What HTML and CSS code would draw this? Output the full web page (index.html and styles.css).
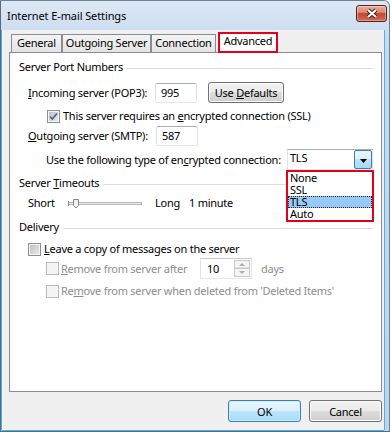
FILE: index.html
```html
<!DOCTYPE html>
<html lang="en">
<head>
  <meta charset="UTF-8" />
  <title>Internet E-mail Settings</title>
  <link rel="stylesheet" href="styles.css">
</head>
<body>

  <div class="window">
    <div class="titlebar">
      <span class="title">Internet E-mail Settings</span>
      <button class="close" aria-label="Close">
        <svg width="14" height="11" viewBox="0 0 14 11">
          <path d="M3 2 L11 9 M11 2 L3 9" stroke="#3b1a14" stroke-width="4"/>
          <path d="M3 2 L11 9 M11 2 L3 9" stroke="#fff" stroke-width="2.2"/>
        </svg>
      </button>
    </div>

    <div class="client">
      <nav class="tabs" role="tablist">
        <span class="tab" role="tab">General</span>
        <span class="tab" role="tab">Outgoing Server</span>
        <span class="tab" role="tab">Connection</span>
        <span class="tab active" role="tab" aria-selected="true">Advanced</span>
      </nav>

      <section class="panel" role="tabpanel">
        <div class="group-head server-head"><span>Server Port Numbers</span><i class="rule"></i></div>

        <div class="row port-row">
          <span class="label"><u>I</u>ncoming server (POP3):</span>
          <span class="field">995</span>
          <button class="btn defaults">Use <u>D</u>efaults</button>
        </div>

        <div class="row ssl-row">
          <span class="check">
            <svg width="11" height="11" viewBox="0 0 11 11"><path d="M2 5.5 L4.3 8 L9 2.5" fill="none" stroke="#4a6691" stroke-width="1.7"/></svg>
          </span>
          <span>This server requires an <u>e</u>ncrypted connection (SSL)</span>
        </div>

        <div class="row port-row smtp-row">
          <span class="label"><u>O</u>utgoing server (SMTP):</span>
          <span class="field">587</span>
        </div>

        <div class="row sub combo-row">
          <span>Use the following type of en<u>c</u>rypted connection:</span>
          <div class="combo">
            <span class="combo-value">TLS</span>
            <span class="combo-btn">
              <svg width="7" height="4" viewBox="0 0 7 4"><path d="M0 0 H7 L3.5 4 Z" fill="#000"/></svg>
            </span>
            <ul class="combo-list">
              <li>None</li>
              <li>SSL</li>
              <li class="selected">TLS</li>
              <li>Auto</li>
            </ul>
          </div>
        </div>

        <div class="group-head timeouts-head"><span>Server <u>T</u>imeouts</span><i class="rule"></i></div>

        <div class="row slider-row">
          <span class="slider-label">Short</span>
          <svg class="slider" width="74" height="16" viewBox="0 0 74 16">
            <rect x="0.5" y="7.5" width="73" height="2" fill="#e9ebec" stroke="#b3b6ba"/>
            <path d="M0.5 6 V11" stroke="#8a8d91"/>
            <path d="M5.5 4.5 H10.5 V10.5 L8 13 L5.5 10.5 Z" fill="#f2f2f2" stroke="#85898e"/>
          </svg>
          <span class="slider-long">Long</span>
          <span>1 minute</span>
        </div>

        <div class="group-head delivery-head"><span>Delivery</span><i class="rule"></i></div>

        <div class="row leave-row">
          <span class="check"></span>
          <span><u>L</u>eave a copy of messages on the server</span>
        </div>

        <div class="row sub disabled remove-row">
          <span class="check"></span>
          <span class="remove-label"><u>R</u>emove from server after</span>
          <span class="spin">
            <span class="spin-value">10</span>
            <svg width="16" height="17" viewBox="0 0 16 17">
              <rect x="0.5" y="0.5" width="15" height="7.5" fill="#f4f4f4" stroke="#c9c9c9"/>
              <rect x="0.5" y="8.5" width="15" height="8" fill="#f4f4f4" stroke="#c9c9c9"/>
              <path d="M5 6 L8 3 L11 6 Z" fill="#aeaeae"/>
              <path d="M5 11 L8 14 L11 11 Z" fill="#aeaeae"/>
            </svg>
          </span>
          <span class="days">days</span>
        </div>

        <div class="row sub disabled deleted-row">
          <span class="check"></span>
          <span>Re<u>m</u>ove from server when deleted from 'Deleted Items'</span>
        </div>
      </section>

      <div class="footer">
        <button class="btn default">OK</button>
        <button class="btn">Cancel</button>
      </div>
    </div>
  </div>

</body>
</html>
```

FILE: styles.css
```css
/* Reset */
* {
  margin: 0;
  padding: 0;
  box-sizing: border-box;
}

body {
  background: #fff;
  color: #000;
  font-family: "Noto Sans", "DejaVu Sans", sans-serif;
  font-size: 11px;
  letter-spacing: -0.25px;
}

button {
  font: inherit;
  letter-spacing: inherit;
  color: inherit;
}

u {
  text-underline-offset: 1px;
}

/* Window frame */
.window {
  width: 390px;
  height: 432px;
  display: flex;
  flex-direction: column;
  padding: 0 5px 1px 1px;
  border: 1px solid #6f8098;
  border-left-color: #5b687a;
  border-bottom-color: #5b687a;
  border-radius: 0 6px 0 0;
  background: linear-gradient(#dde8f5, #c8d9ee 40px, #bfd3eb);
}

.titlebar {
  display: flex;
  align-items: flex-start;
  height: 29px;
}

.title {
  margin: 7px 0 0 5px;
  line-height: 16px;
  letter-spacing: -0.1px;
}

.close {
  display: flex;
  align-items: center;
  justify-content: center;
  width: 31px;
  height: 17px;
  margin: 4px -3px 0 auto;
  border: 1px solid #5a1f17;
  border-radius: 3px;
  background: linear-gradient(#eab0a0, #d98470 45%, #c24a35 50%, #d06a55);
  box-shadow: inset 0 0 0 1px rgba(255, 255, 255, 0.35);
}

.client {
  flex: 1;
  display: flex;
  flex-direction: column;
  padding: 2px 2px 8px 7px;
  background: #f0f0f0;
  box-shadow: -1px 0 0 #45b5e5, 1px 0 0 #45b5e5, 0 1px 0 #45b5e5;
}

/* Tabs */
.tabs {
  display: flex;
  align-items: flex-end;
  height: 20px;
  padding-left: 2px;
}

.tab {
  height: 18px;
  padding: 0 3px;
  line-height: 16px;
  border: 1px solid #898c95;
  border-bottom: 0;
  background: linear-gradient(#f4f4f4, #e3e3e3);
}

.tab:first-child {
  padding: 0 5px;
}

.tab.active {
  position: relative;
  z-index: 1;
  height: 21px;
  margin: 0 0 -1px 2px;
  padding: 0 4px;
  line-height: 14px;
  border: 2px solid #e3001b;
  background: #fff;
}

.panel {
  height: 340px;
  padding: 0 8px 0 9px;
  border: 1px solid #898c95;
  background: #fff;
}

/* Group boxes */
.group-head {
  display: flex;
  line-height: 16px;
  white-space: nowrap;
}

.group-head .rule {
  flex: 1;
  height: 1px;
  margin: 9px 0 0 4px;
  background: #d5dfe5;
}

.server-head { margin-top: 6px; }
.timeouts-head { margin-top: 5px; }
.delivery-head { margin-top: 8px; }

.row {
  display: flex;
  align-items: center;
  margin-left: 9px;
  line-height: 16px;
  white-space: nowrap;
}

.row > * {
  flex-shrink: 0;
}

.row.sub {
  margin-left: 27px;
}

.disabled {
  color: #8d8d8d;
}

/* Ports */
.port-row { margin-top: 7px; }
.smtp-row { margin-top: 2px; }

.label {
  width: 127px;
}

.smtp-row .label {
  width: 128px;
}

.field {
  width: 42px;
  height: 20px;
  padding-left: 5px;
  line-height: 18px;
  border: 1px solid;
  border-color: #abadb3 #e2e3ea #e3e9ef #e2e3ea;
  border-radius: 2px;
  background: #fff;
}

.btn {
  height: 22px;
  border: 1px solid #707070;
  border-radius: 3px;
  background: linear-gradient(#f2f2f2, #ebebeb 50%, #dddddd 50%, #cfcfcf);
  box-shadow: inset 0 0 0 1px #fcfcfc;
}

.btn.defaults {
  width: 76px;
  height: 21px;
  margin-left: 11px;
}

/* Checkboxes */
.ssl-row {
  margin: 5px 0 0 28px;
}

.check {
  width: 13px;
  height: 13px;
  margin-right: 3px;
  border: 1px solid #8e8f8f;
  background: linear-gradient(135deg, #b8bcc2, #eeeeee);
  box-shadow: inset 0 0 0 1px #f4f4f4;
}

.check svg {
  display: block;
}

.disabled .check {
  margin-right: 2px;
  border-color: #bcbcbc;
  background: #f4f4f4;
  box-shadow: none;
}

/* Combo box */
.combo-row { margin-top: 3px; }

.combo {
  position: relative;
  display: flex;
  width: 86px;
  height: 21px;
  margin-left: auto;
  border: 1px solid;
  border-color: #abadb3 #dbdfe6 #e3e9ef #e2e3ea;
  background: #fff;
}

.combo-value {
  flex: 1;
  padding-left: 2px;
  line-height: 16px;
}

.combo-btn {
  display: flex;
  justify-content: center;
  width: 18px;
  padding-top: 8px;
  border: 1px solid #3c7fb1;
  border-radius: 2px;
  background: linear-gradient(#eaf6fd, #d9f0fc 50%, #bee6fd 50%, #a7d9f5);
}

.combo-btn svg {
  display: block;
}

.combo-list {
  position: absolute;
  top: 20px;
  left: -2px;
  z-index: 2;
  width: 88px;
  list-style: none;
  border: 2px solid #e3001b;
  background: #fff;
}

.combo-list li {
  height: 12px;
  padding-left: 2px;
  line-height: 12px;
}

.combo-list li.selected {
  background: #99c9f5;
  outline: 1px dotted #222;
  outline-offset: -1px;
}

/* Slider */
.slider-row { margin-top: 4px; }

.slider-label {
  width: 40px;
}

.slider {
  display: block;
}

.slider-long {
  width: 34px;
  margin-left: 13px;
}

/* Delivery */
.leave-row { margin-top: 6px; }
.remove-row { margin-top: 1px; }
.deleted-row { margin-top: 4px; }

.remove-label {
  width: 139px;
}

.spin {
  display: flex;
  align-items: flex-start;
  width: 52px;
  height: 21px;
  border: 1px solid;
  border-color: #c5c9d0 #dfe2e8 #e5e9ee #dfe2e8;
  background: #fff;
}

.spin-value {
  padding: 2px 0 0 6px;
  color: #000;
}

.spin svg {
  display: block;
  margin: 1px 1px 0 auto;
}

.days {
  margin-left: 9px;
}

/* Dialog buttons */
.footer {
  display: flex;
  justify-content: flex-end;
  gap: 8px;
  margin-top: 8px;
}

.footer .btn {
  width: 73px;
}

.btn.default {
  border-color: #3c7fb1;
  background: linear-gradient(#eaf6fd, #d9f0fc 50%, #bee6fd 50%, #a7d9f5);
  box-shadow: inset 0 0 0 1px #c8ecfb;
}
```
